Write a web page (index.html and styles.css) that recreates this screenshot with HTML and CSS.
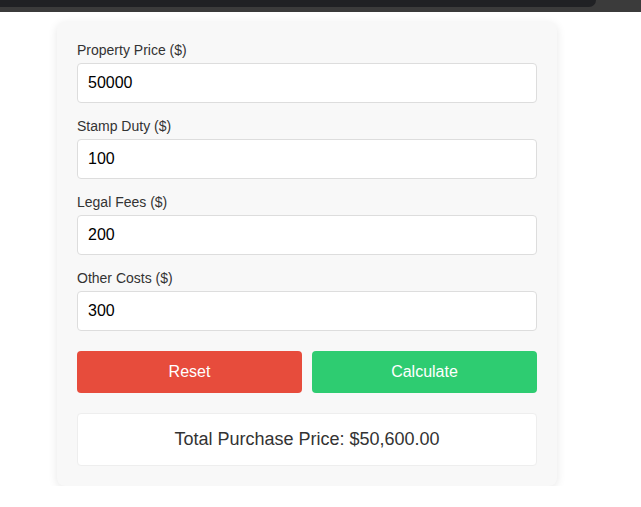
FILE: index.html
```html
<!DOCTYPE html>
<html lang="en">
<head>
<meta charset="utf-8">
<title>Purchase Price Calculator</title>
<link rel="stylesheet" href="styles.css">
</head>
<body>
<div class="topbar"><div class="topbar-inner"></div></div>
<main class="page">
  <div class="card">
    <div class="group">
      <label class="label" for="price">Property Price ($)</label>
      <input class="input" id="price" type="text" value="50000">
    </div>
    <div class="group">
      <label class="label" for="duty">Stamp Duty ($)</label>
      <input class="input" id="duty" type="text" value="100">
    </div>
    <div class="group">
      <label class="label" for="legal">Legal Fees ($)</label>
      <input class="input" id="legal" type="text" value="200">
    </div>
    <div class="group">
      <label class="label" for="other">Other Costs ($)</label>
      <input class="input" id="other" type="text" value="300">
    </div>
    <div class="buttons">
      <button class="btn btn-reset" type="button">Reset</button>
      <button class="btn btn-calc" type="button">Calculate</button>
    </div>
    <div class="result">Total Purchase Price: $50,600.00</div>
  </div>
</main>
</body>
</html>
```
FILE: styles.css
```css
* { box-sizing: border-box; }
html, body { margin: 0; padding: 0; background: #fff; }
body { font-family: "Liberation Sans", Arial, sans-serif; color: #333; }
.topbar { height: 12px; background: #3b3b3b; }
.topbar-inner { width: 596px; height: 7px; background: #202124; border-bottom-right-radius: 8px; }
.page { padding: 10px 0 0 57px; }
.card {
  width: 500px;
  background: #f8f8f8;
  border-radius: 8px;
  padding: 20px;
  box-shadow: 0 2px 10px rgba(0,0,0,0.1);
}
.group { margin-bottom: 15px; }
.label { display: block; font-size: 14px; line-height: 16px; margin-bottom: 5px; color: #333; }
.input {
  display: block;
  width: 100%;
  height: 40px;
  padding: 0 10px;
  border: 1px solid #ddd;
  border-radius: 4px;
  background: #fff;
  font-family: "Liberation Sans", Arial, sans-serif;
  font-size: 16px;
  color: #000;
}
.buttons { display: flex; gap: 10px; margin-top: 20px; }
.btn {
  flex: 1;
  height: 42px;
  border: none;
  border-radius: 4px;
  color: #fff;
  font-family: "Liberation Sans", Arial, sans-serif;
  font-size: 16px;
}
.btn-reset { background: #e74c3c; }
.btn-calc { background: #2ecc71; }
.result {
  margin-top: 20px;
  height: 53px;
  display: flex;
  align-items: center;
  justify-content: center;
  background: #fff;
  border: 1px solid #eee;
  border-radius: 4px;
  font-size: 18px;
  color: #333;
}
```
